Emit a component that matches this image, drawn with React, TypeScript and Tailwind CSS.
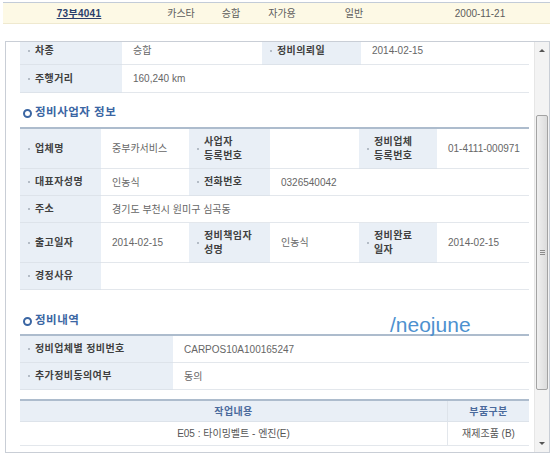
import React from "react";

// 정비이력 상세 (scrolled panel)

type CellProps = { children?: React.ReactNode; className?: string };

function Label({ children, className = "" }: CellProps) {
	return (
		<div
			className={`flex items-center gap-[5px] bg-[#e9eff6] pl-[8px] border-b border-[#dde3ea] font-bold tracking-[0.4px] text-[#3f3f3f] ${className}`}>
			<span className="w-[2px] h-[2px] shrink-0 bg-[#b4bcc6]" />
			<span className="leading-[14px]">{children}</span>
		</div>
	);
}

function Value({ children, className = "" }: CellProps) {
	return (
		<div
			className={`flex items-center pl-[11px] border-b border-[#e3e7ec] text-[#666] ${className}`}>
			{children}
		</div>
	);
}

function Heading({ children, className = "" }: CellProps) {
	return (
		<div
			className={`flex items-center gap-[3px] h-[14px] pl-[3px] text-[11.5px] tracking-[0.5px] font-bold text-[#3b66a3] ${className}`}>
			<span className="w-[9px] h-[9px] rounded-full border-2 border-[#3b66a3]" />
			<span>{children}</span>
		</div>
	);
}

function ScrollBar() {
	return (
		<div className="w-[15px] flex flex-col bg-[#f3f3f3] border-l border-[#e6e6e6]">
			<div className="h-[17px] flex items-center justify-center">
				<span className="w-0 h-0 border-l-[3px] border-r-[3px] border-b-[3px] border-l-transparent border-r-transparent border-b-[#555]" />
			</div>
			<div className="flex-1 relative">
				<div className="absolute left-[1px] top-[56px] w-[12px] h-[275px] rounded-[2px] border border-[#a3a3a3] bg-gradient-to-r from-[#f0f0f0] to-[#dcdcdc] flex flex-col items-center justify-center gap-[1px]">
					<span className="w-[5px] h-px bg-[#8c8c8c]" />
					<span className="w-[5px] h-px bg-[#8c8c8c]" />
					<span className="w-[5px] h-px bg-[#8c8c8c]" />
				</div>
			</div>
			<div className="h-[17px] flex items-center justify-center">
				<span className="w-0 h-0 border-l-[3px] border-r-[3px] border-t-[3px] border-l-transparent border-r-transparent border-t-[#555]" />
			</div>
		</div>
	);
}

export default function App() {
	return (
		<div className="w-[550px] h-[455px] bg-white overflow-hidden text-[10px] font-['Liberation_Sans','Noto_Sans_CJK_KR',sans-serif]">
			{/* 차량 목록 선택 행 */}
			<div className="ml-[3px] mt-[2px] h-[22px] border-t border-[#c3ccd8] border-b border-b-[#efe9cf] bg-[#fdf9e5] grid grid-cols-[152px_52px_48px_54px_90px_1fr] items-center text-[#5c5c5c]">
				<span className="text-center font-bold text-[#2a3f6c] underline tracking-[0.3px]">73부4041</span>
				<span className="text-center">카스타</span>
				<span className="text-center">승합</span>
				<span className="text-center">자가용</span>
				<span className="text-center">일반</span>
				<span className="text-center pl-[11px]">2000-11-21</span>
			</div>

			<div className="relative ml-[5px] mt-[17px] w-[545px] h-[412px] border border-[#c9ced6] flex">
				<div className="flex-1 overflow-hidden pl-[14px] pr-[5px]">
					<div className="-mt-[7px]">
						<div className="grid grid-cols-[102px_140px_99px_1fr] grid-rows-[28px_28px] border-t-2 border-[#adbccd]">
							<Label>차종</Label>
							<Value>승합</Value>
							<Label>정비의뢰일</Label>
							<Value>2014-02-15</Value>
							<Label>주행거리</Label>
							<Value className="col-span-3">160,240 km</Value>
						</div>

						<Heading className="mt-[13px] mb-[7px]">정비사업자 정보</Heading>

						<div className="grid grid-cols-[81px_88px_81px_89px_78px_1fr] grid-rows-[40px_27px_27px_40px_27px] border-t-2 border-[#adbccd]">
							<Label>업체명</Label>
							<Value>중부카서비스</Value>
							<Label>
								사업자
								<br />
								등록번호
							</Label>
							<Value />
							<Label>
								정비업체
								<br />
								등록번호
							</Label>
							<Value>01-4111-000971</Value>

							<Label>대표자성명</Label>
							<Value>인농식</Value>
							<Label>전화번호</Label>
							<Value className="col-span-3">0326540042</Value>

							<Label>주소</Label>
							<Value className="col-span-5">경기도 부천시 원미구 심곡동</Value>

							<Label>출고일자</Label>
							<Value>2014-02-15</Value>
							<Label>
								정비책임자
								<br />
								성명
							</Label>
							<Value>인농식</Value>
							<Label>
								정비완료
								<br />
								일자
							</Label>
							<Value>2014-02-15</Value>

							<Label>경정사유</Label>
							<Value className="col-span-5" />
						</div>

						<Heading className="mt-[24px] mb-[6px]">정비내역</Heading>

						<div className="grid grid-cols-[153px_1fr] grid-rows-[27px_27px] border-t-2 border-[#adbccd]">
							<Label>정비업체별 정비번호</Label>
							<Value>CARPOS10A100165247</Value>
							<Label>추가정비동의여부</Label>
							<Value>동의</Value>
						</div>

						<div className="mt-[9px] grid grid-cols-[427px_1fr] grid-rows-[21px_24px] border-t-2 border-[#adbccd] text-center">
							<div className="flex items-center justify-center bg-[#e9eff6] border-b border-[#dde3ea] font-bold tracking-[0.4px] text-[#4a6a9c]">
								작업내용
							</div>
							<div className="flex items-center justify-center bg-[#e9eff6] border-b border-l border-[#dde3ea] font-bold tracking-[0.4px] text-[#4a6a9c]">
								부품구분
							</div>
							<div className="flex items-center justify-center border-b border-[#e3e7ec] text-[#555]">
								E05 : 타이밍벨트 - 엔진(E)
							</div>
							<div className="flex items-center justify-center border-b border-l border-[#e3e7ec] text-[#555]">
								재제조품 (B)
							</div>
						</div>
					</div>
				</div>
				<ScrollBar />

				{/* watermark */}
				<span className="absolute left-[384px] top-[272px] text-[21px] leading-none text-[#4d91cf]">
					/neojune
				</span>
			</div>
		</div>
	);
}
